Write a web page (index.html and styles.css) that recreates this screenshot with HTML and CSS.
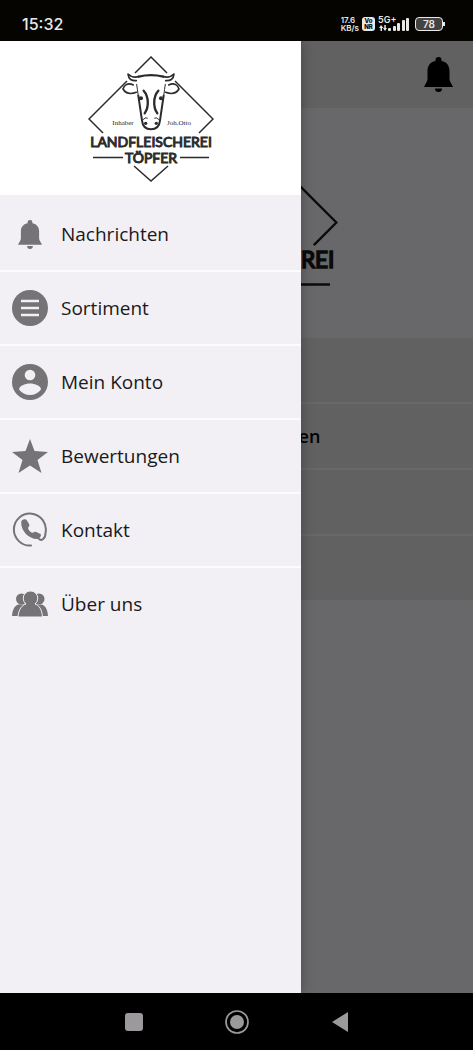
FILE: index.html
```html
<!DOCTYPE html>
<html lang="de">
<head>
    <meta charset="UTF-8">
    <meta name="viewport" content="width=device-width, initial-scale=1.0">
    <title>Landfleischerei Töpfer</title>
    <link rel="stylesheet" href="styles.css">
</head>
<body>
    <!-- shared shapes -->
    <svg class="defs" width="0" height="0" aria-hidden="true">
        <symbol id="bell" viewBox="0 0 29 35">
            <path d="M14.500 0a3 3 0 0 1 3 3v1C23 5 25.500 9 25.500 14v8c0 3 2.500 5 3.500 8H0c1-3 3.500-5 3.500-8v-8C3.500 9 6 5 11.500 4V3a3 3 0 0 1 3-3z"/>
            <path d="M11 31.500h7a3.500 3.500 0 0 1-7 0z"/>
        </symbol>
        <symbol id="logo" viewBox="0 0 126 126">
            <g fill="none" stroke="currentColor" stroke-width="1.500">
                <path d="M47 17L63 1l16 16M39 25L1 63l14 14M87 25l38 38-14 14M46 110l17 15 17-15M5 101.500h30M92 101.500h29"/>
            </g>
            <g transform="translate(-17 -11) scale(.3333)" fill="none" stroke="currentColor" stroke-width="5" stroke-linecap="round" stroke-linejoin="round">
                <path d="M196 107C183 108 172 103 171 87c10 10 20 11 32 8 M277 95c12 3 22 2 32-8-1 16-12 21-25 20"/>
                <path d="M203 95q37-9 74 0" stroke-width="7"/>
                <path d="M187 120c-18-9-28 2-31 12 9 15 24 16 40 10M293 120c18-9 28 2 31 12-9 15-24 16-40 10"/>
                <path d="M197 118q2 12 5 36M283 118q-2 12-5 36" stroke-width="3"/>
                <path d="M202 152l11 74c2 20 12 27 27 27s25-7 27-27l11-74" stroke-width="6"/>
                <path d="M218 137c16 18 16 50 3 68M262 137c-16 18-16 50-3 68" stroke-width="7"/>
                <path d="M217 223q6-7 12-4M263 223q-6-7-12-4" stroke-width="3"/>
                <g fill="currentColor" stroke="none">
                    <circle cx="210" cy="160" r="6"/>
                    <circle cx="270" cy="160" r="6"/>
                    <circle cx="224" cy="235" r="5"/>
                    <circle cx="256" cy="235" r="5"/>
                </g>
            </g>
            <g fill="currentColor" text-anchor="middle">
                <text class="logo-small" x="35" y="69">Inhaber</text>
                <text class="logo-small" x="91" y="69">Joh.Otto</text>
                <text class="logo-name" x="63" y="91">LANDFLEISCHEREI</text>
                <text class="logo-name" x="63" y="107">TÖPFER</text>
            </g>
        </symbol>
    </svg>

    <div class="statusbar">
        <span class="time">15:32</span>
        <div class="status-icons">
            <span class="speed">17.6<br>KB/s</span>
            <span class="vonr">Vo<br>NR</span>
            <div class="network">
                <span class="net-type">5G+</span>
                <svg width="32" height="16" viewBox="0 0 32 16" fill="currentColor" aria-hidden="true">
                    <path d="M3 9l2.500 3H4v3H2.500v-3H1zM7 15l-2-3h1.300V9h1.500v3H9z"/>
                    <rect x="10" y="12" width="3" height="3" rx="1"/>
                    <rect x="15" y="10" width="3" height="5" rx="1"/>
                    <rect x="19" y="7" width="3" height="8" rx="1"/>
                    <rect x="24" y="4" width="3" height="11" rx="1"/>
                    <rect x="28" y="2" width="3" height="13" rx="1"/>
                </svg>
            </div>
            <span class="battery">78</span>
        </div>
    </div>

    <div class="app">
        <main class="page">
            <header class="page-header">
                <button class="bell-btn" aria-label="Nachrichten">
                    <svg width="29" height="35"><use href="#bell"/></svg>
                </button>
            </header>
            <div class="page-logo">
                <svg width="203" height="203" role="img" aria-label="Landfleischerei Töpfer"><use href="#logo"/></svg>
            </div>
            <div class="tiles">
                <a href="#" class="tile" aria-label="Sortiment"></a>
                <a href="#" class="tile">Neue Bewertungen</a>
                <a href="#" class="tile" aria-label="Kontakt"></a>
                <a href="#" class="tile" aria-label="Über uns"></a>
            </div>
        </main>
        <div class="scrim"></div>

        <nav class="drawer">
            <div class="drawer-head">
                <svg width="126" height="126" role="img" aria-label="Landfleischerei Töpfer"><use href="#logo"/></svg>
            </div>
            <ul class="menu">
                <li><a href="#">
                    <svg class="icon" viewBox="0 0 36 36"><use href="#bell" x="6" y="4" width="24" height="29"/></svg>
                    Nachrichten
                </a></li>
                <li><a href="#">
                    <svg class="icon" viewBox="0 0 36 36">
                        <circle cx="18" cy="18" r="18"/>
                        <path d="M9 11h18M9 18h18M9 25h18" class="cut-line"/>
                    </svg>
                    Sortiment
                </a></li>
                <li><a href="#">
                    <svg class="icon" viewBox="0 0 36 36">
                        <circle cx="18" cy="18" r="18"/>
                        <circle cx="18" cy="11" r="5.300" class="cut"/>
                        <path d="M7 25.500c0-3.500 6-6 11-6s11 2.500 11 6c-2.500 3.500-6.500 5.500-11 5.500s-8.500-2-11-5.500z" class="cut"/>
                    </svg>
                    Mein Konto
                </a></li>
                <li><a href="#">
                    <svg class="icon" viewBox="0 0 36 36">
                        <path d="M18 1l4.500 12L36 14 25.500 22l4 13L18 27.500 6.500 35l4-13L0 14l13.500-1z"/>
                    </svg>
                    Bewertungen
                </a></li>
                <li><a href="#">
                    <svg class="icon" viewBox="0 0 36 36">
                        <path d="M19 33.500A16 16 0 1 1 33.500 21C33.500 27 29 30 26 26" class="ring"/>
                        <path d="M9.200 10C9.500 7.500 13.300 6 15 8.500l2.300 4c.6 1.500-1.400 2.500-1.200 4 .8 2.300 2.300 3.800 4.300 4.300 1.300-.2 2-1.500 3.300-1l4.800 2.200c1.400 1.300-.5 4.800-3.800 5-7.500 0-16-8-15.500-17z"/>
                    </svg>
                    Kontakt
                </a></li>
                <li><a href="#">
                    <svg class="icon" viewBox="0 0 36 36">
                        <circle cx="9.500" cy="13" r="5.500"/>
                        <circle cx="27" cy="13" r="5.500"/>
                        <path d="M0 30c.5-7 3-11 7-11.500h22c4 .5 6.500 4.500 7 11.500z"/>
                        <path d="M6 31c.5-7.500 4-12 8-13a7.300 7.300 0 1 1 9 0c4 1 7 5.500 7.500 13z" class="front"/>
                    </svg>
                    Über uns
                </a></li>
            </ul>
        </nav>
    </div>

    <div class="navbar">
        <button aria-label="Letzte Apps">
            <svg width="24" height="24" viewBox="0 0 24 24"><rect x="3" y="3" width="18" height="18" rx="3"/></svg>
        </button>
        <button aria-label="Startbildschirm">
            <svg width="24" height="24" viewBox="0 0 24 24"><circle cx="12" cy="12" r="11" fill="none" stroke="currentColor" stroke-width="1.700"/><circle cx="12" cy="12" r="7"/></svg>
        </button>
        <button aria-label="Zurück">
            <svg width="24" height="24" viewBox="0 0 24 24"><path d="M4 12L20 2v20z"/></svg>
        </button>
    </div>
</body>
</html>
```

FILE: styles.css
```css
* {
    box-sizing: border-box;
}
body {
    margin: 0;
    min-height: 100vh;
    display: flex;
    flex-direction: column;
    font-family: "Open Sans", "Noto Sans", sans-serif;
    background-color: #000;
    color: #1a191b;
}
svg {
    display: block;
    flex-shrink: 0;
}
a {
    color: inherit;
    text-decoration: none;
}
button {
    padding: 0;
    border: none;
    background: none;
    color: inherit;
    cursor: pointer;
}
.defs {
    position: absolute;
}

/* status bar */
.statusbar {
    display: flex;
    align-items: center;
    justify-content: space-between;
    height: 41px;
    padding: 6px 30px 0 22px;
    background-color: #050400;
    color: #e8e8e6;
    font-family: Inter, Roboto, sans-serif;
}
.time {
    font-size: 16px;
    font-weight: 500;
}
.status-icons {
    display: flex;
    align-items: center;
    gap: 3px;
    font-weight: 600;
}
.speed {
    font-size: 8px;
    line-height: 8px;
}
.vonr {
    width: 13px;
    padding: 1px 0;
    border-radius: 3px;
    background-color: #e8e8e6;
    color: #050400;
    font-size: 6px;
    line-height: 6px;
    font-weight: 800;
    text-align: center;
}
.network {
    position: relative;
}
.net-type {
    position: absolute;
    top: -1px;
    left: 0;
    font-size: 9px;
    line-height: 9px;
}
.battery {
    position: relative;
    width: 28px;
    margin: 0 0 0 2px;
    border: 1px solid #e8e8e6;
    border-radius: 4px;
    background-color: #444342;
    font-size: 10px;
    line-height: 12px;
    text-align: center;
}
.battery::after {
    content: "";
    position: absolute;
    top: 4px;
    right: -3px;
    width: 2px;
    height: 4px;
    background-color: #e8e8e6;
}

/* page behind the drawer */
.app {
    position: relative;
    flex: 1;
    overflow: hidden;
    background-color: #f1eff3;
}
.page-header {
    display: flex;
    align-items: center;
    justify-content: flex-end;
    height: 67px;
    padding: 0 20px;
    background-color: #e4e2e4;
    color: #000;
}
.page-header svg,
.icon,
.navbar svg {
    fill: currentColor;
}
.page-logo {
    display: flex;
    justify-content: center;
    padding: 13px 0 14px;
}
.tiles {
    display: grid;
    gap: 2px;
}
.tile {
    display: flex;
    align-items: center;
    justify-content: center;
    height: 64px;
    background-color: #e2e0e3;
    color: #000;
    font-size: 18px;
    font-weight: 600;
}
.scrim {
    position: absolute;
    inset: 0;
    background-color: rgba(0, 0, 0, 0.57);
}

/* drawer */
.drawer {
    position: absolute;
    top: 0;
    bottom: 0;
    left: 0;
    width: 301px;
    max-width: 80%;
    background-color: #f2f0f4;
    box-shadow: 0 0 12px rgba(0, 0, 0, 0.3);
}
.drawer-head {
    display: flex;
    justify-content: center;
    padding: 15px 0 13px;
    background-color: #fff;
    color: #2b2b2e;
}
.logo-name {
    font-family: Lato, sans-serif;
    font-size: 14px;
    font-weight: 400;
    stroke: currentColor;
    stroke-width: 1;
}
.logo-small {
    font-family: "Liberation Serif", serif;
    font-size: 7px;
}
.menu {
    margin: 0;
    padding: 3px 0 0;
    list-style: none;
}
.menu li {
    border-bottom: 2px solid #fcfbfd;
}
.menu li:last-child {
    border-bottom: none;
}
.menu a {
    display: flex;
    align-items: center;
    gap: 13px;
    height: 72px;
    padding: 0 12px;
    font-size: 19px;
}
.icon {
    width: 36px;
    height: 36px;
    color: #757376;
}
.cut {
    fill: #f2f0f4;
}
.cut-line {
    fill: none;
    stroke: #f2f0f4;
    stroke-width: 2.5;
}
.ring {
    fill: none;
    stroke: currentColor;
    stroke-width: 2;
    stroke-linecap: round;
}
.front {
    stroke: #f2f0f4;
    stroke-width: 1;
}

/* system buttons */
.navbar {
    display: flex;
    align-items: center;
    justify-content: center;
    height: 57px;
    background-color: #000;
    color: #9b999c;
}
.navbar button {
    display: flex;
    align-items: center;
    justify-content: center;
    width: 103px;
    height: 48px;
}
```
